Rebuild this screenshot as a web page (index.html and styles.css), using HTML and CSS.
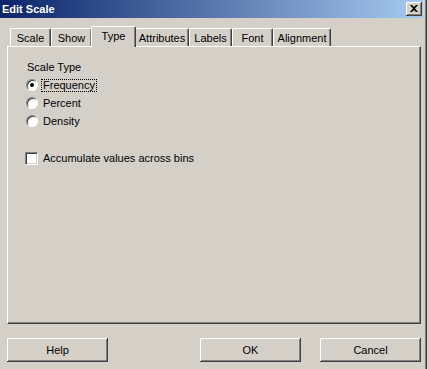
FILE: index.html
```html
<!DOCTYPE html>
<html>
<head>
<meta charset="utf-8">
<link rel="stylesheet" href="styles.css">
</head>
<body>
<div class="window">
  <div class="titlebar">
    <span class="title">Edit Scale</span>
    <span class="close">
      <svg width="8" height="7" viewBox="0 0 8 7"><path d="M0 0h2l2 2 2-2h2L5 3.5 8 7H6L4 5 2 7H0l3-3.5z" fill="#000"/></svg>
    </span>
  </div>
  <div class="body">
    <div class="tabs">
      <div class="tab first">Scale</div>
      <div class="tab">Show</div>
      <div class="tab active">Type</div>
      <div class="tab">Attributes</div>
      <div class="tab">Labels</div>
      <div class="tab">Font</div>
      <div class="tab">Alignment</div>
    </div>
    <div class="panel">
      <div class="group-label">Scale Type</div>
      <div class="options">
        <label class="opt"><span class="radio checked"></span><span class="focus">Frequency</span></label>
        <label class="opt"><span class="radio"></span><span class="lbl">Percent</span></label>
        <label class="opt"><span class="radio"></span><span class="lbl">Density</span></label>
      </div>
      <label class="opt check-row"><span class="checkbox"></span><span class="lbl">Accumulate values across bins</span></label>
    </div>
    <div class="buttons">
      <div class="btn">Help</div>
      <div class="spacer"></div>
      <div class="btn">OK</div>
      <div class="btn">Cancel</div>
    </div>
  </div>
</div>
</body>
</html>
```
FILE: styles.css
```css
html, body {
  margin: 0;
  padding: 0;
  background: #d4d0c8;
}
body {
  width: 429px;
  height: 369px;
  overflow: hidden;
  font-family: "Liberation Sans", Arial, sans-serif;
  font-size: 11px;
  color: #000;
}
.window {
  width: 426px;
  height: 369px;
  border-right: 1px solid #404040;
  box-shadow: inset -1px 0 0 #808080;
  display: flex;
  flex-direction: column;
}
.titlebar {
  height: 18px;
  margin-right: 3px;
  background: linear-gradient(to right, #0a246a, #a6caf0);
  display: flex;
  align-items: center;
  justify-content: space-between;
}
.title {
  color: #fff;
  font-weight: bold;
  font-size: 11px;
  padding-left: 2px;
  font-family: "Liberation Sans", Arial, sans-serif;
}
.close {
  width: 16px;
  height: 14px;
  margin-right: 1px;
  box-sizing: border-box;
  background: #d4d0c8;
  box-shadow: inset -1px -1px 0 #404040, inset 1px 1px 0 #fff, inset -2px -2px 0 #808080;
  display: flex;
  align-items: center;
  justify-content: center;
}
.close svg { display: block; margin-left: -1px; margin-top: -1px; }
.body {
  flex: 1;
  display: flex;
  flex-direction: column;
  padding-left: 7px;
}
.tabs {
  display: flex;
  align-items: flex-end;
  margin-top: 8px;
  padding-left: 3px;
  height: 20px;
  position: relative;
  z-index: 1;
}
.tab {
  height: 18px;
  box-sizing: border-box;
  padding: 0 6px;
  display: flex;
  align-items: center;
  justify-content: center;
  border-top: 1px solid #fff;
  border-left: 1px solid #fff;
  border-right: 1px solid #404040;
  border-radius: 2px 2px 0 0;
  box-shadow: inset -1px 0 0 #808080;
  background: #d4d0c8;
  padding-top: 1px;
}
.tab:nth-child(1) { width: 41px; }
.tab:nth-child(2) { width: 41px; }
.tab:nth-child(4) { width: 54px; }
.tab:nth-child(5) { width: 43px; }
.tab:nth-child(6) { width: 41px; }
.tab:nth-child(7) { width: 58px; }
.tab.active {
  height: 21px;
  width: 45px;
  margin: 0 -1px -1px -1px;
  padding-bottom: 3px;
  position: relative;
  z-index: 2;
}
.panel {
  width: 414px;
  height: 278px;
  box-sizing: border-box;
  border-top: 1px solid #fff;
  border-left: 1px solid #fff;
  border-right: 1px solid #404040;
  border-bottom: 1px solid #404040;
  box-shadow: inset -1px -1px 0 #808080;
  padding: 14px 0 0 19px;
}
.group-label {
  height: 13px;
  line-height: 13px;
}
.options {
  margin-top: 5px;
  display: flex;
  flex-direction: column;
  gap: 6px;
}
.opt {
  display: flex;
  align-items: center;
  height: 12px;
}
.radio {
  width: 12px;
  height: 12px;
  box-sizing: border-box;
  border-radius: 50%;
  border: 1px solid;
  border-color: #808080 #fff #fff #808080;
  background: #fff;
  box-shadow: inset 1px 1px 0 #404040;
  position: relative;
  flex: none;
  margin-left: -1px;
}
.radio.checked::after {
  content: "";
  position: absolute;
  left: 3px;
  top: 3px;
  width: 4px;
  height: 4px;
  border-radius: 50%;
  background: #000;
}
.lbl {
  margin-left: 5px;
  line-height: 12px;
}
.focus {
  margin-left: 4px;
  padding: 0 1px;
  outline: 1px dotted #000;
  line-height: 11px;
}
.check-row {
  margin-top: 25px;
  margin-left: -2px;
}
.checkbox {
  width: 13px;
  height: 13px;
  box-sizing: border-box;
  border-top: 1px solid #808080;
  border-left: 1px solid #808080;
  border-right: 1px solid #fff;
  border-bottom: 1px solid #fff;
  box-shadow: inset 1px 1px 0 #404040, inset -1px -1px 0 #d4d0c8;
  background: #fff;
  flex: none;
}
.check-row .lbl { margin-left: 5px; }
.buttons {
  display: flex;
  margin-top: 14px;
  width: 414px;
}
.spacer { flex: 1; }
.btn {
  width: 101px;
  height: 24px;
  box-sizing: border-box;
  display: flex;
  align-items: center;
  justify-content: center;
  box-shadow: inset -1px -1px 0 #404040, inset 1px 1px 0 #fff, inset -2px -2px 0 #808080;
  font-size: 11px;
}
.btn:last-child { margin-left: 19px; }
```
